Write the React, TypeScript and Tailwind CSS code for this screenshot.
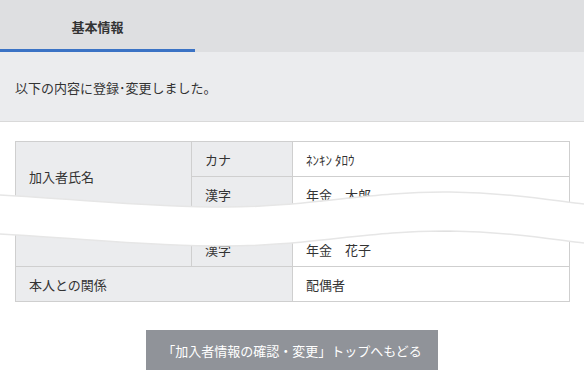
const rows = {
  top: 'M0 15 C 90 20, 150 27, 225 27 C 310 27, 370 11, 450 12 C 510 13, 550 20, 584 24',
  bottom: 'M0 54 C 90 59, 150 66, 225 66 C 310 66, 370 50, 450 51 C 510 52, 550 59, 584 63',
  fill:
    'M0 15 C 90 20, 150 27, 225 27 C 310 27, 370 11, 450 12 C 510 13, 550 20, 584 24 L584 63 C 550 59, 510 52, 450 51 C 370 50, 310 66, 225 66 C 150 66, 90 59, 0 54 Z',
};

function Wave() {
  return (
    <svg className="absolute left-0 top-[180px] pointer-events-none" width="584" height="80" viewBox="0 0 584 80">
      <path d={rows.fill} fill="#ffffff" />
      <path d={rows.top} fill="none" stroke="#e6e6e6" strokeWidth="1.5" />
      <path d={rows.bottom} fill="none" stroke="#e6e6e6" strokeWidth="1.5" />
    </svg>
  );
}

const cell = 'border border-[#cfcfcf] px-[13px] align-middle';
const label = `${cell} bg-[#ebecee]`;

export default function App() {
  return (
    <div
      className="relative w-[584px] h-[378px] overflow-hidden bg-white text-[13px] text-[#333] leading-none"
      style={{ fontFamily: '"Noto Sans CJK JP", "Noto Sans", sans-serif' }}
    >
      <div className="h-[52px] bg-[#dedfe1] flex">
        <div className="w-[195px] flex flex-col">
          <div className="flex-1 flex items-center justify-center font-bold text-[#333] pt-[4px]">基本情報</div>
          <div className="h-[3px] bg-[#3b73c5]" />
        </div>
      </div>

      <div className="h-[70px] bg-[#ebecee] border-b border-[#d9d9d9] flex items-center px-[15px] pt-[2px]">
        以下の内容に登録･変更しました。
      </div>

      <div className="px-[15px] pt-[19px]">
        <table className="w-[554px] border-collapse table-fixed">
          <colgroup>
            <col className="w-[176px]" />
            <col className="w-[101px]" />
            <col className="w-[277px]" />
          </colgroup>
          <tbody>
            <tr className="h-[35px]">
              <td rowSpan={2} className={label}>加入者氏名</td>
              <td className={label}>カナ</td>
              <td className={cell}>ﾈﾝｷﾝ ﾀﾛｳ</td>
            </tr>
            <tr className="h-[35px]">
              <td className={label}>漢字</td>
              <td className={cell}>年金　太郎</td>
            </tr>
            <tr className="h-[20px]">
              <td rowSpan={2} className={label}></td>
              <td className={label}></td>
              <td className={cell}></td>
            </tr>
            <tr className="h-[35px]">
              <td className={label}>漢字</td>
              <td className={cell}>年金　花子</td>
            </tr>
            <tr className="h-[35px]">
              <td colSpan={2} className={label}>本人との関係</td>
              <td className={cell}>配偶者</td>
            </tr>
          </tbody>
        </table>
      </div>

      <div className="flex justify-center pt-[28px]">
        <button className="w-[292px] h-[40px] bg-[#909399] text-white text-[13px] flex items-center justify-center">
          「加入者情報の確認・変更」トップへもどる
        </button>
      </div>

      <Wave />
    </div>
  );
}
